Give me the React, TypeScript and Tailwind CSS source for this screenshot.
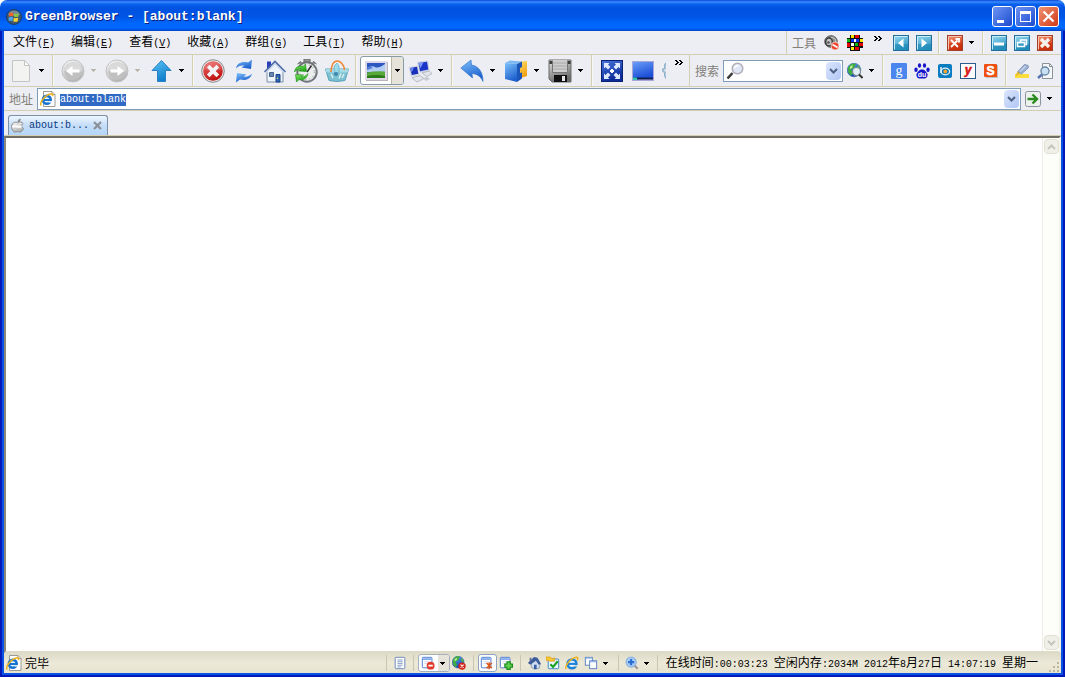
import { useEffect, useRef, useState } from 'react';
import type { ReactNode } from 'react';

const MENUS = [
    ['文件', 'F'],
    ['编辑', 'E'],
    ['查看', 'V'],
    ['收藏', 'A'],
    ['群组', 'G'],
    ['工具', 'T'],
    ['帮助', 'H'],
];

const MONO = "font-['Liberation_Mono',monospace] text-[10px]";

// latin runs are set smaller so that two of them fill one chinese cell
function Mixed({ text }: { text: string }) {
    const runs = text.split(/([\u4e00-\u9fff]+)/).filter(Boolean);
    return (
        <span className="whitespace-pre">
            {runs.map((run, i) =>
                /[\u4e00-\u9fff]/.test(run) ? run : <span key={i} className={MONO}>{run}</span>
            )}
        </span>
    );
}

// gradients shared by all icons
function Gradients() {
    const list: [string, string, string][] = [
        ['gGray', '#fdfdfd', '#b4b4b4'],
        ['gBlue', '#5cc4f6', '#0f7fcb'],
        ['gSky', '#7cc0fb', '#1f62cf'],
        ['gDeep', '#5aa5f5', '#1746b4'],
        ['gScreen', '#6a9cf8', '#1c50d8'],
        ['gRed', '#f26a6a', '#c01414'],
        ['gNavy', '#4a74dd', '#0a2a96'],
        ['gTeal', '#9adcf0', '#2b93c2'],
        ['gOrange', '#f59a78', '#cc2f0c'],
        ['gGold', '#ffe06a', '#f0a010'],
        ['gSteel', '#e4e4e4', '#6c6c6c'],
        ['gGreen', '#8df070', '#22a51a'],
    ];
    return (
        <svg className="absolute size-0" aria-hidden="true">
            <defs>
                {list.map(([id, a, b]) => (
                    <linearGradient key={id} id={id} x1="0" y1="0" x2="0.4" y2="1">
                        <stop offset="0" stopColor={a} />
                        <stop offset="1" stopColor={b} />
                    </linearGradient>
                ))}
            </defs>
        </svg>
    );
}

function Big({ children }: { children: ReactNode }) {
    return <svg viewBox="0 0 24 24" className="size-6 shrink-0" fill="none" aria-hidden="true">{children}</svg>;
}

function Small({ children }: { children: ReactNode }) {
    return <svg viewBox="0 0 16 16" className="size-4 shrink-0" fill="none" aria-hidden="true">{children}</svg>;
}

function Tiny({ children }: { children: ReactNode }) {
    return <svg viewBox="0 0 16 16" className="size-[14px] shrink-0" fill="none" aria-hidden="true">{children}</svg>;
}

function Caret({ dim = false }: { dim?: boolean }) {
    return (
        <svg viewBox="0 0 5 3" className="h-[3px] w-[5px] shrink-0" shapeRendering="crispEdges" aria-hidden="true">
            <path d="M0 0h5v1H4v1H3v1H2V2H1V1H0z" fill={dim ? '#b9b6a8' : '#000'} />
        </svg>
    );
}

function Chevrons() {
    return (
        <svg viewBox="0 0 8 5" className="h-[5px] w-2" shapeRendering="crispEdges" aria-hidden="true">
            <path d="M0 0h2v1h1v1h1v1H3v1H2v1H0V4h1V3h1V2H1V1H0zM4 0h2v1h1v1h1v1H7v1H6v1H4V4h1V3h1V2H5V1H4z" fill="#000" />
        </svg>
    );
}

function Sep() {
    return (
        <div className="flex w-2 shrink-0 self-stretch pl-[3px]" aria-hidden="true">
            <div className="w-px bg-[#d3cfb0]" />
            <div className="w-px bg-[#f8f8f4]" />
        </div>
    );
}

function StatusSep() {
    return <div className="h-4 w-px shrink-0 bg-[#c9c6b4]" aria-hidden="true" />;
}

function Tool({ label, children }: { label: string; children: ReactNode }) {
    return (
        <button aria-label={label} className="flex h-[29px] w-[31px] shrink-0 items-center justify-center">
            {children}
        </button>
    );
}

function DropTool({ label, dim, children }: { label: string; dim?: boolean; children: ReactNode }) {
    return (
        <div className="flex shrink-0">
            <Tool label={label}>{children}</Tool>
            <button aria-label={`${label}菜单`} className="flex w-[13px] items-center pl-[3px]">
                <Caret dim={dim} />
            </button>
        </div>
    );
}

function Mini({ label, children }: { label: string; children: ReactNode }) {
    return (
        <button aria-label={label} className="flex h-6 w-[23px] shrink-0 items-center justify-center">
            {children}
        </button>
    );
}

function StatusButton({ label, children }: { label: string; children: ReactNode }) {
    return (
        <button aria-label={label} className="flex h-[18px] w-[19px] shrink-0 items-center justify-center">
            {children}
        </button>
    );
}

function ComboArrow({ label }: { label: string }) {
    return (
        <button
            type="button"
            aria-label={label}
            className="flex h-[18px] w-[15px] shrink-0 items-center justify-center rounded-sm bg-linear-to-br from-[#dce6fd] to-[#b0c6f5]"
        >
            <svg viewBox="0 0 9 6" className="h-[6px] w-[9px]" fill="none" aria-hidden="true">
                <path d="M1 1l3.500 3.500L8 1" stroke="#4d6185" strokeWidth="2" />
            </svg>
        </button>
    );
}

function IePage() {
    return (
        <Small>
            <path d="M3.500 .5h8.500l3 3v12H3.500z" fill="#fff" stroke="#9b9a94" />
            <path d="M12 .5v3h3" fill="#e4e4e0" stroke="#9b9a94" />
            <circle cx="6.800" cy="8.800" r="3.900" fill="#eaf5ff" stroke="#1673d0" strokeWidth="2.600" />
            <path d="M3.500 9h7.500" stroke="#1673d0" strokeWidth="2" />
            <path d="M8.500 10.200h4v1.400h-4z" fill="#fff" />
            <path d="M1.200 14.500C-1 12 5 3.500 11.500 2.800c1.500 0 1.500 1 .8 2.200" stroke="#f0b21c" strokeWidth="1.500" />
        </Small>
    );
}

function RoundArrow({ flip = false }: { flip?: boolean }) {
    return (
        <Big>
            <circle cx="12" cy="12" r="11" fill="url(#gGray)" stroke="#c2c2c2" />
            <circle cx="12" cy="12" r="8.800" fill="#c0c0c0" />
            <path d="M3.200 12a8.800 8.800 0 0 1 17.600 0c-5 2-12-2-17.600 0z" fill="#dadada" />
            <path
                d={flip ? 'M5.500 10.500h7V7l6.500 5-6.500 5v-3.500h-7z' : 'M18.500 10.500h-7V7L5 12l6.500 5v-3.500h7z'}
                fill="#fff"
            />
        </Big>
    );
}

function Globe() {
    return (
        <>
            <circle cx="7" cy="7" r="6.800" fill="url(#gDeep)" stroke="#24508e" strokeWidth=".5" />
            <path d="M2 3c2-3 6-3 7-2L7 5 4 6.500l2 4-2 2C1 10.500 0 6 2 3z" fill="#3fae3f" />
            <path d="M3 3.500l3-1.500-1 3-2 1z" fill="#c3ef9a" />
            <path d="M10 2l3 2v4l-2-2z" fill="#57b54a" />
        </>
    );
}

function WindowPage() {
    return (
        <>
            <rect x="1.500" y="1.500" width="11" height="12" rx="1" fill="#fff" stroke="#3d6fc9" />
            <path d="M2 3.500h10" stroke="#7fa8ee" strokeWidth="2" />
            <path d="M4 6.500h6M4 8.500h5" stroke="#c9d6ea" />
        </>
    );
}

function BlueBox({ label, children }: { label: string; children: ReactNode }) {
    return (
        <Mini label={label}>
            <Small>
                <rect x=".5" y=".5" width="15" height="15" fill="url(#gTeal)" stroke="#246f9c" />
                <path d="M1 9h14v6H1z" fill="#1c86b4" opacity=".55" />
                <path d="M1.500 14.500v-13h13" stroke="#c6edf8" />
                {children}
            </Small>
        </Mini>
    );
}

function RedBox({ label, small }: { label: string; small?: boolean }) {
    return (
        <Mini label={label}>
            <Small>
                <rect x=".5" y=".5" width="15" height="15" fill="url(#gOrange)" stroke="#a3402a" />
                <path d="M1 8h14v7H1z" fill="#c92c08" opacity=".45" />
                <path d="M1.500 14.500v-13h13" stroke="#f8c4b0" />
                {small ? (
                    <path d="M4 5l7 7M10.500 5.500L4 12M8.500 4H12v3.500" stroke="#fff" strokeWidth="1.800" />
                ) : (
                    <path d="M4 4l8 8M12 4l-8 8" stroke="#f6f2ee" strokeWidth="3.200" />
                )}
            </Small>
        </Mini>
    );
}

function TitleBar() {
    const frame = 'flex size-[21px] items-center justify-center rounded-[3px] border border-white bg-linear-to-br';
    return (
        <header className="flex h-[31px] shrink-0 items-center rounded-t-[7px] bg-[linear-gradient(180deg,#0b48d8_0,#3a8cff_2px,#0a62ee_4px,#0053e1_8px,#0055e6_17px,#0066fc_23px,#0068ff_28px,#0042c8_31px)] pt-[2px] pr-[6px] pl-[6px]">
            <svg viewBox="0 0 16 16" className="size-4" aria-hidden="true">
                <circle cx="8" cy="8" r="7.500" fill="#3b5a70" stroke="#1d3a66" />
                <path d="M2 6a6.300 6.300 0 0 1 12 0q-6 2-12 0z" fill="#a9bcc8" opacity=".5" />
                <path d="M3.200 4.300q2-1.500 4.300-.3L7 7.500q-2-1-4.200.2z" fill="#f0642c" />
                <path d="M8.300 4.500q2 1 4.500-.2L12.200 7.600q-2 1-4.400 0z" fill="#8cc63e" />
                <path d="M2.800 8.500q2-1.200 4.200-.2l-.5 3.600q-2-1-3.900 0z" fill="#4ba5ee" />
                <path d="M7.800 8.700q2 1 4.400-.1l-.5 3.600q-2 1-4.400 0z" fill="#fbd032" />
            </svg>
            <h1 className="ml-[3px] flex-1 truncate pt-px font-['Liberation_Mono',monospace] text-[13px] leading-4 font-bold text-white [text-shadow:1px_1px_0_#0a1f80]">
                GreenBrowser - [about:blank]
            </h1>
            <div className="flex gap-[2px]">
                <button aria-label="最小化" className={`${frame} from-[#6d93f2] to-[#1d49d0]`}>
                    <svg viewBox="0 0 19 19" className="size-[19px]"><path d="M4 13h7v3H4z" fill="#fff" /></svg>
                </button>
                <button aria-label="最大化" className={`${frame} from-[#6d93f2] to-[#1d49d0]`}>
                    <svg viewBox="0 0 19 19" className="size-[19px]" shapeRendering="crispEdges">
                        <path d="M4 4h11v11H4zM5 7v7h9V7z" fill="#fff" fillRule="evenodd" />
                    </svg>
                </button>
                <button aria-label="关闭" className={`${frame} from-[#f0906e] to-[#cf3510]`}>
                    <svg viewBox="0 0 19 19" className="size-[19px]">
                        <path d="M4.500 4.500l10 10M14.500 4.500l-10 10" stroke="#fff" strokeWidth="2.200" />
                    </svg>
                </button>
            </div>
        </header>
    );
}

function MenuRow() {
    return (
        <div className="flex h-6 shrink-0 items-center border-b border-[#d3cfb0]">
            <nav className="flex min-w-0 flex-1 pl-px">
                {MENUS.map(([name, key]) => (
                    <button key={key} className="h-5 px-2 whitespace-nowrap">
                        {name}
                        <span className={MONO}>(<u>{key}</u>)</span>
                    </button>
                ))}
            </nav>
            <div className="flex shrink-0 items-center self-stretch border-l border-[#d3cfb0] pr-[5px] pl-[5px]">
                <span className="w-7 text-[#83807a]">工具</span>
                <Mini label="静音">
                    <Small>
                        <ellipse cx="7" cy="6.500" rx="6.300" ry="5.800" fill="#8b8b8b" stroke="#5a5a5a" />
                        <ellipse cx="5" cy="7" rx="3.300" ry="4" fill="#c4c4c4" stroke="#3c3c3c" strokeWidth="1.500" />
                        <circle cx="4.500" cy="7.500" r="1.300" fill="#555" />
                        <path d="M7 2.500q5 0 5 5" stroke="#d0d0d0" />
                        <circle cx="11" cy="11" r="4" fill="#e8452c" stroke="#fff" strokeWidth=".6" />
                        <path d="M8.500 9.500l5 3" stroke="#fff" strokeWidth="1.600" />
                    </Small>
                </Mini>
                <Mini label="颜色">
                    <svg viewBox="0 0 16 16" className="size-4 shrink-0" shapeRendering="crispEdges" aria-hidden="true">
                        <path d="M3 0h10v3h3v10h-3v3H3v-3H0V3h3z" fill="#111" />
                        <path d="M8 0h4v3H8zM0 8h3v4H0zM12 8h4v3h-4zM8 12h4v3H8z" fill="#e80000" />
                        <path d="M4 0h3v3H4zM13 4h3v3h-3zM4 12h3v3H4z" fill="#ffe600" />
                        <path d="M0 4h3v3H0zM8 8h3v3H8z" fill="#12b812" />
                        <path d="M4 4h3v3H4zM9 4h3v3H9z" fill="#1030e8" />
                        <path d="M7 4h2v3H7zM4 8h3v3H4z" fill="#fff" />
                    </svg>
                </Mini>
                <button aria-label="更多" className="flex h-[18px] w-[23px] justify-center pt-[2px]"><Chevrons /></button>
                <BlueBox label="上一个"><path d="M10.500 3.500v9L5 8z" fill="#fff" /></BlueBox>
                <BlueBox label="下一个"><path d="M5.500 3.500v9L11 8z" fill="#fff" /></BlueBox>
                <Sep />
                <RedBox label="关闭页面" small />
                <button aria-label="关闭菜单" className="flex h-5 w-[13px] items-center pl-[3px]"><Caret /></button>
                <Sep />
                <BlueBox label="最小化页面"><path d="M3 7.500h10v3H3z" fill="#fff" /></BlueBox>
                <BlueBox label="还原页面">
                    <path d="M6.500 7V5h6v4.500h-2M3.500 7.500h7v4h-7z" stroke="#fff" strokeWidth="1.500" />
                </BlueBox>
                <RedBox label="关闭全部" />
            </div>
        </div>
    );
}

function MainTools() {
    return (
        <div className="flex min-w-0 flex-1 items-center self-stretch overflow-hidden pl-px">
            <DropTool label="新建">
                <Big>
                    <path d="M3.500 1.500h12l5 5v16h-17z" fill="#f3f3f2" stroke="#c4c4c4" />
                    <path d="M15.500 1.500v5h5z" fill="#fff" stroke="#c4c4c4" />
                </Big>
            </DropTool>
            <Sep />
            <DropTool label="后退" dim><RoundArrow /></DropTool>
            <DropTool label="前进" dim><RoundArrow flip /></DropTool>
            <DropTool label="向上">
                <Big><path d="M12.500 1.500l9.500 10h-5.500v11h-8v-11H3z" fill="url(#gBlue)" stroke="#2a82c4" /></Big>
            </DropTool>
            <Sep />
            <Tool label="停止">
                <Big>
                    <circle cx="12" cy="12" r="11.300" fill="#e6e6e6" stroke="#8c8c8c" />
                    <circle cx="12" cy="12" r="9.800" fill="url(#gRed)" />
                    <path d="M3 10a9.200 9.200 0 0 1 18 0q-9 4-18 0z" fill="#fff" opacity=".15" />
                    <path d="M7.200 7.200l9.600 9.600M16.800 7.200l-9.600 9.600" stroke="#f4f4f4" strokeWidth="3.800" />
                </Big>
            </Tool>
            <Tool label="刷新">
                <Big>
                    <path d="M4 9.500C5 4 10 2 16 3.500L20 .5 19 10l-9.500-1.500 3-2C9 6 6 7 4 9.500z" fill="url(#gSky)" />
                    <path d="M20 14.500C19 20 14 22 8 20.500l-4 3L5 14l9.500 1.500-3 2c3.500.5 6.500-.5 8.500-3z" fill="url(#gSky)" />
                </Big>
            </Tool>
            <Tool label="主页">
                <Big>
                    <path d="M4 2.500h4V10H4z" fill="#2a3fb8" />
                    <path d="M4 12.500l8-8 8 8v10.500H4z" fill="#eef4fb" stroke="#7b8da8" />
                    <path d="M1.500 13L12 2.500 22.500 13" stroke="#4a68a8" strokeWidth="1.600" />
                    <path d="M3 13.500l9-9 9 9" stroke="#cdd8ea" strokeWidth="1.200" />
                    <path d="M13 15.500h4v7.500h-4z" fill="#2c67b5" stroke="#194285" />
                    <path d="M6.500 13.500h4v4h-4z" fill="#6887b4" stroke="#47608a" />
                    <circle cx="14.300" cy="19.200" r=".7" fill="#ffe26a" />
                </Big>
            </Tool>
            <Tool label="定时刷新">
                <Big>
                    <path d="M10 0h6v3h-6zM3.500 5l3-2.500L8 5M22.500 5l-3-2.500L18 5" fill="#999" stroke="#666" />
                    <circle cx="13" cy="13" r="9.700" fill="#eceeee" stroke="#70767a" strokeWidth="2" />
                    <circle cx="13" cy="13" r="7.300" stroke="#8c8c8c" strokeDasharray="1 3" />
                    <path d="M13 13l4.500-6.500" stroke="#333" strokeWidth="1.500" />
                    <path d="M.5 13C1 8 5 6 9 7.500L11.500 5l1 7.500-8-.5 2.500-2C4.500 9.800 2 11 .5 13z" fill="url(#gGreen)" stroke="#1b9114" strokeWidth=".6" />
                    <path d="M14 14.500C13 19.500 9 22 5 20.500L2.500 23l-1-7.500 8 .5L7 18c2.500.3 5-1 7-3.500z" fill="url(#gGreen)" stroke="#1b9114" strokeWidth=".6" />
                </Big>
            </Tool>
            <Tool label="收藏篮">
                <Big>
                    <path d="M.5 10h23L20 21.500q-8 2-16 0z" fill="#7cc0d2" stroke="#5ba3ba" />
                    <path d="M.5 10h23l-1 3.500h-21z" fill="#a6dbe6" />
                    <path d="M6 15l2 4M16 14.500l-2 5M19 15l-2 4" stroke="#d8eff2" strokeWidth="1.500" />
                    <path d="M6 13C6.500 5 9 2 12 2s7 3 7.500 9" stroke="#ee8434" strokeWidth="1.600" />
                    <path d="M9 7l3-3 2 3v6l-4 2z" fill="#9adbe8" stroke="#5ba3ba" strokeWidth=".6" />
                    <circle cx="11" cy="15" r="2" fill="#3f88ad" />
                </Big>
            </Tool>
            <Sep />
            <div className="flex h-[29px] w-11 shrink-0 overflow-hidden rounded-[3px] border border-[#8a9ba8] bg-white">
                <button aria-label="显示图片" className="flex w-[30px] items-center justify-center">
                    <Big>
                        <path d="M2 3h22v19H2z" fill="#b6b6bc" />
                        <path d="M1 2h22v19H1z" fill="#dfd8e6" />
                        <path d="M3 4h18v15H3z" fill="#2d56c0" />
                        <path d="M3 9q5-3 8-1t10-3v8H3z" fill="#b4cdf2" />
                        <path d="M3 9q4-2 6 0l-6 2z" fill="#4a7ad8" />
                        <path d="M3 13.500q9-2 18-1V19H3z" fill="#58a83a" />
                        <path d="M3 17q9-2 18 0v2H3z" fill="#2b7a19" />
                    </Big>
                </button>
                <button aria-label="图片菜单" className="flex flex-1 items-center border-l border-[#b9b7a8] bg-[#e6e4da] pl-[3px]">
                    <Caret />
                </button>
            </div>
            <DropTool label="代理">
                <Big>
                    <path d="M9 3l11-1.500 1.500 10L12 14z" fill="#c9d0e4" />
                    <path d="M10.500 4l8.500-1.200 1.300 7.700-8.300 1.700z" fill="#1a35c8" />
                    <path d="M10.500 4l5-.7-3 6z" fill="#7f9af5" />
                    <path d="M14 14l7-2 3 2.500-5 3z" fill="#e4e6ec" stroke="#a4a8b2" strokeWidth=".7" />
                    <path d="M.5 8l9.500-1.500 1.500 9.500L3 18z" fill="#d4d7e0" />
                    <path d="M2 9l7-1.200 1.300 7L3.800 16z" fill="#1730bb" />
                    <path d="M2 9l4-.6-2.300 5z" fill="#6d87f0" />
                    <path d="M4 19l8-2.500 4 3L9 23z" fill="#e4e6ec" stroke="#a4a8b2" strokeWidth=".7" />
                    <path d="M15 19l4-1 3 2-4 2z" fill="#c6c9d2" />
                </Big>
            </DropTool>
            <Sep />
            <DropTool label="撤销">
                <Big>
                    <path d="M.8 9L11 1l.5 5c7 1 11.500 7 11.500 16.500C20.500 17 17 15 12 14.500l.5 4.500z" fill="url(#gSky)" stroke="#2a6cc4" strokeWidth=".6" />
                </Big>
            </DropTool>
            <DropTool label="收藏夹">
                <Big>
                    <path d="M14 3l9-1v15l-9 3z" fill="url(#gGold)" />
                    <path d="M1 4l5-2.500 12 1-5 2.500z" fill="#7cb8f4" />
                    <path d="M1 4l12 1v18L1 20z" fill="url(#gSky)" />
                    <path d="M13 5l5-2.500V8l-2 1v5l2-.5v6L13 23z" fill="#1c55b8" />
                </Big>
            </DropTool>
            <DropTool label="保存">
                <Big>
                    <path d="M1 1h22v22H4l-3-3z" fill="url(#gSteel)" stroke="#6b6b6b" />
                    <path d="M5 1h14v12H5z" fill="#cdcdcd" />
                    <path d="M5 4h14M5 7h14M5 10h14" stroke="#aaa" />
                    <path d="M1.500 2h2.500v3H1.500zM20 2h2.500v3H20z" fill="#3c3c3c" />
                    <path d="M4.500 2v11.500h15V2" stroke="#777" />
                    <path d="M6 16h13v7H6z" fill="#111" />
                    <path d="M14 17h3v5h-3z" fill="#e6e6e6" />
                </Big>
            </DropTool>
            <Sep />
            <Tool label="全屏">
                <Big>
                    <rect x="1.500" y="1.500" width="21" height="21" fill="url(#gNavy)" stroke="#0b2272" />
                    <path d="M4 4h5.500L8 5.500l2.500 2.500L8 10.500 5.500 8 4 9.500zM20 4h-5.500L16 5.500 13.500 8l2.500 2.500L18.500 8 20 9.500zM4 20h5.500L8 18.500l2.500-2.500L8 13.500 5.500 16 4 14.500zM20 20h-5.500l1.500-1.500-2.500-2.500 2.500-2.500 2.500 2.500 1.500-1.500z" fill="#dfe8fc" />
                    <path d="M12 10l2 2-2 2-2-2z" fill="#fff" stroke="#fff" />
                </Big>
            </Tool>
            <Tool label="屏幕">
                <Big>
                    <path d="M1 2h22v20H1z" fill="#a9a6d8" />
                    <path d="M2 3h20v16H2z" fill="url(#gScreen)" />
                    <path d="M2 18.500h20v2H2z" fill="#0e1f52" />
                    <path d="M2 18.500h4v2.500H2z" fill="#2fc5b0" />
                </Big>
            </Tool>
            <div className="flex w-2 shrink-0 overflow-hidden pl-1" aria-hidden="true">
                <svg viewBox="0 0 24 24" className="size-6 shrink-0" fill="none">
                    <path d="M4 4q-2 2-1 5l-3 2 3 3q-1 4 2 6" fill="#cfe0ee" stroke="#8db0cc" strokeWidth="1.500" />
                </svg>
            </div>
            <button aria-label="更多工具" className="flex h-[21px] w-[26px] shrink-0 justify-center"><Chevrons /></button>
        </div>
    );
}

function SearchTools() {
    return (
        <div className="flex shrink-0 items-center self-stretch border-l border-[#d3cfb0] pr-[5px] pl-[5px]">
            <label htmlFor="search" className="w-7 text-[#83807a]">搜索</label>
            <div className="flex h-[22px] w-[120px] items-center border border-[#7f9db9] bg-white pr-px pl-[2px]">
                <svg viewBox="0 0 18 18" className="size-[18px] shrink-0" fill="none" aria-hidden="true">
                    <path d="M1.500 16.500l5-5.500" stroke="#3a3a3a" strokeWidth="2.600" />
                    <circle cx="11.500" cy="6.500" r="5.300" fill="#dfe6f4" stroke="#b0aeb8" strokeWidth="1.500" />
                    <path d="M8.500 6q1-2.500 4-2.500" stroke="#fff" strokeWidth="1.500" />
                </svg>
                <input id="search" type="text" className="min-w-0 flex-1 px-1 outline-none" />
                <ComboArrow label="搜索记录" />
            </div>
            <Mini label="搜索网页">
                <Small>
                    <Globe />
                    <circle cx="9.500" cy="8.500" r="4" fill="#e2eff6" stroke="#7a8a94" strokeWidth="1.200" />
                    <path d="M12 11.500l3.500 3.500" stroke="#333" strokeWidth="2" />
                </Small>
            </Mini>
            <button aria-label="搜索引擎" className="flex h-5 w-[13px] items-center pl-[3px]"><Caret /></button>
            <Sep />
            <Mini label="谷歌">
                <Small>
                    <rect width="16" height="16" rx="1" fill="#4a86ee" />
                    <text x="8" y="12" textAnchor="middle" fontFamily="Liberation Serif" fontSize="14" fill="#fff">g</text>
                </Small>
            </Mini>
            <Mini label="百度">
                <Small>
                    <path d="M8 6.500c-3 0-3.500 2-5 3.500-1.500 2 0 5.500 2.500 5.500h5c2.500 0 4-3.500 2.500-5.500-1.500-1.500-2-3.500-5-3.500z" fill="#1414cc" />
                    <ellipse cx="2" cy="6.800" rx="1.700" ry="2.200" fill="#1414cc" />
                    <ellipse cx="5.500" cy="2.500" rx="1.600" ry="2.300" fill="#1414cc" />
                    <ellipse cx="10.500" cy="2.500" rx="1.600" ry="2.300" fill="#1414cc" />
                    <ellipse cx="14" cy="6.800" rx="1.700" ry="2.200" fill="#1414cc" />
                    <text x="8" y="14" textAnchor="middle" fontFamily="Liberation Sans" fontWeight="bold" fontSize="7" fill="#fff">du</text>
                </Small>
            </Mini>
            <Mini label="必应">
                <Small>
                    <rect x="1" y="1" width="14" height="14" rx="2" fill="#0c7cc0" />
                    <path d="M4 4v6" stroke="#e6f3fb" strokeWidth="1.500" />
                    <ellipse cx="8.300" cy="8.500" rx="4.300" ry="3.300" stroke="#e6f3fb" strokeWidth="1.300" />
                    <circle cx="8.300" cy="8.500" r="1.900" fill="#f5a52a" />
                </Small>
            </Mini>
            <Mini label="有道">
                <Small>
                    <rect x=".5" y=".5" width="15" height="15" fill="#fff" stroke="#2c5c8c" />
                    <text x="8" y="11" textAnchor="middle" fontFamily="Liberation Sans" fontStyle="italic" fontWeight="bold" fontSize="12" fill="#d81818" stroke="#d81818" strokeWidth=".6">y</text>
                </Small>
            </Mini>
            <Mini label="搜狗">
                <Small>
                    <path d="M3 2h12v13H3z" fill="#c0c0c0" />
                    <rect x="1" y="1" width="13" height="13" rx="1" fill="#f0500f" />
                    <text x="7.500" y="12" textAnchor="middle" fontFamily="Liberation Sans" fontWeight="bold" fontSize="12" fill="#fff" stroke="#fff" strokeWidth=".6">S</text>
                </Small>
            </Mini>
            <Sep />
            <Mini label="高亮">
                <Small>
                    <path d="M1 11h14v4H1z" fill="#fadc3a" />
                    <path d="M1.500 13l2-5 3 3z" fill="#e8b828" />
                    <path d="M4 8.500L10.500 1.500 14 2.500l.5 2L7.500 11z" fill="#9fb4d4" stroke="#7b90b4" />
                    <path d="M6 8.500l5.500-5.500" stroke="#e4ecf8" />
                </Small>
            </Mini>
            <Mini label="页内查找">
                <Small>
                    <path d="M5.500.5h7l3 3v12h-10z" fill="#f6f7f9" stroke="#8a929c" />
                    <path d="M12.500.5v3h3" stroke="#8a929c" />
                    <circle cx="8" cy="8" r="4" fill="#c8e2f4" stroke="#6584a4" strokeWidth="1.300" />
                    <path d="M5 11.500L1 15" stroke="#5574b0" strokeWidth="2.500" />
                </Small>
            </Mini>
        </div>
    );
}

function AddressRow() {
    const [url, setUrl] = useState('about:blank');
    const box = useRef<HTMLInputElement>(null);

    useEffect(() => {
        box.current?.focus();
        box.current?.select();
    }, []);

    return (
        <form
            className="flex h-6 shrink-0 items-center border-b border-[#d3cfb0] pr-[5px] pl-[5px]"
            onSubmit={(e) => e.preventDefault()}
        >
            <label htmlFor="address" className="w-7 shrink-0 text-[#83807a]">地址</label>
            <div className="flex h-[22px] min-w-0 flex-1 items-center border border-[#7f9db9] bg-white pr-px pl-[2px]">
                <IePage />
                <input
                    id="address"
                    ref={box}
                    type="text"
                    spellCheck={false}
                    value={url}
                    onChange={(e) => setUrl(e.target.value)}
                    className="ml-1 min-w-0 flex-1 pt-[2px] font-['Liberation_Mono',monospace] text-[10px] leading-3 outline-none selection:bg-[#316ac5] selection:text-white"
                />
                <ComboArrow label="地址记录" />
            </div>
            <button aria-label="转到" className="ml-1 size-4 shrink-0">
                <Small>
                    <rect x=".5" y=".5" width="15" height="15" rx="2" fill="#eef0ee" stroke="#8a929c" />
                    <path d="M2.500 8h9M7.500 3.500L12 8l-4.500 4.500" stroke="#2a8c1c" strokeWidth="2.400" />
                </Small>
            </button>
            <button type="button" aria-label="转到菜单" className="flex h-5 w-[15px] shrink-0 items-center pl-[6px]"><Caret /></button>
        </form>
    );
}

function TabRow() {
    return (
        <div className="flex h-[25px] shrink-0 items-end border-b border-[#d3cfb0] pl-1">
            <div className="flex h-[20px] w-[100px] items-center rounded-t-[3px] border border-b-0 border-[#7c8ea8] bg-linear-to-b from-[#eef6ff] via-[#c4ddf8] to-[#b4d6f8] px-px">
                <svg viewBox="0 0 16 16" className="size-[15px] shrink-0" fill="none" aria-hidden="true">
                    <path d="M8 5c2-1.500 5-1 6 .8-2 1.200-2 4.200.3 5.200C13.500 13.500 12 15 10.500 15c-1 0-1.500-.5-2.500-.5S6.500 15 5.500 15C3 15 1 10.500 2 7.500 3 4.500 6 4 8 5z" fill="url(#gGray)" stroke="#858585" />
                    <path d="M8 4.500C8 2.500 9.500 1 11.500.5c0 2.300-1.500 4-3.500 4z" fill="#888" />
                    <path d="M2.500 9.500c3-2 6 1 10-.5" stroke="#fff" strokeWidth="2" />
                </svg>
                <button className="ml-1 flex-1 text-left font-['Liberation_Mono',monospace] text-[10px] leading-3 whitespace-nowrap text-[#0a3a80]">
                    about:b...
                </button>
                <button aria-label="关闭标签" className="shrink-0 pr-1">
                    <svg viewBox="0 0 9 9" className="size-[9px]" aria-hidden="true">
                        <path d="M1 1l7 7M8 1L1 8" stroke="#8b9097" strokeWidth="2.200" />
                    </svg>
                </button>
            </div>
        </div>
    );
}

function ScrollButton({ label, down }: { label: string; down?: boolean }) {
    return (
        <button disabled aria-label={label} className="flex size-[15px] items-center justify-center rounded-sm border border-[#e2e0d4] bg-[#f1f0e8]">
            <svg viewBox="0 0 9 6" className="h-[6px] w-[9px]" fill="none" aria-hidden="true">
                <path d={down ? 'M1 1l3.500 3.500L8 1' : 'M1 5l3.500-3.500L8 5'} stroke="#c6c5bb" strokeWidth="2" />
            </svg>
        </button>
    );
}

function StatusBar() {
    return (
        <footer className="flex h-[20px] shrink-0 items-center bg-linear-to-b from-[#dedbc9] via-[#ece9d8] to-[#e6e3d0] pr-px pl-[2px]">
            <IePage />
            <span className="ml-[3px] flex-1">完毕</span>
            <StatusSep />
            <div className="flex w-[26px] justify-center">
                <StatusButton label="日志">
                    <Tiny>
                        <rect x="2.500" y="1.500" width="11" height="13" rx="1" fill="#fff" stroke="#5b7db8" />
                        <path d="M5 4.500h6M5 6.500h6M5 8.500h6M5 10.500h6M5 12.500h4" stroke="#7b93bd" />
                    </Tiny>
                </StatusButton>
            </div>
            <StatusSep />
            <div className="ml-1 flex h-[18px] w-8 overflow-hidden rounded-[3px] border border-[#a5afbc] bg-white">
                <button aria-label="过滤" className="flex w-[19px] items-center justify-center">
                    <Tiny>
                        <WindowPage />
                        <circle cx="11" cy="11" r="4.500" fill="#e23a2a" />
                        <path d="M8.500 11h5" stroke="#fff" strokeWidth="2" />
                    </Tiny>
                </button>
                <button aria-label="过滤菜单" className="flex flex-1 items-center bg-[#e6e4da] pl-[2px]"><Caret /></button>
            </div>
            <StatusButton label="代理">
                <Tiny>
                    <Globe />
                    <circle cx="11.500" cy="11.500" r="4.200" fill="#d2281e" />
                    <path d="M9.800 9.800l3.400 3.400M13.200 9.800l-3.400 3.400" stroke="#fff" strokeWidth="1.300" />
                </Tiny>
            </StatusButton>
            <div className="w-1" />
            <StatusSep />
            <div className="ml-1 flex h-[18px] w-[19px] items-center justify-center rounded-[3px] border border-[#8ea3bd] bg-white">
                <button aria-label="弹出窗口">
                    <Tiny>
                        <WindowPage />
                        <path d="M7.500 8l6 6M13.500 8l-6 6M10.500 7v8" stroke="#d8541c" strokeWidth="1.600" />
                    </Tiny>
                </button>
            </div>
            <StatusButton label="新窗口">
                <Tiny>
                    <WindowPage />
                    <path d="M11 6v10M6 11h10" stroke="#178a1a" strokeWidth="5" />
                    <path d="M11 7.500v7M7.500 11h7" stroke="#5fd04e" strokeWidth="2.500" />
                </Tiny>
            </StatusButton>
            <div className="w-1" />
            <StatusSep />
            <div className="w-1" />
            <StatusButton label="主页">
                <Tiny>
                    <path d="M5 8l6-3 4 4-1 5-5 1-4-2z" fill="#cfdcee" stroke="#8c9cb4" />
                    <path d="M1 8l7-7 4 1 4 7-2.500 1L10 5 4 10z" fill="#3a5c9c" />
                    <path d="M8 10h3v5H8z" fill="#375fa8" />
                    <path d="M3 2h2v4H3z" fill="#5a6f98" />
                </Tiny>
            </StatusButton>
            <StatusButton label="选项">
                <Tiny>
                    <rect x="2.500" y="3.500" width="12" height="11" rx="1" fill="#e9f5ff" stroke="#2f7bc2" />
                    <path d="M5 9.500l3 3 5.500-6.500" stroke="#1fa324" strokeWidth="2.600" />
                    <path d="M0 1h5l2 2 3-1v4H5L0 5z" fill="#f7c52c" stroke="#cf9412" strokeWidth=".6" />
                </Tiny>
            </StatusButton>
            <StatusButton label="IE">
                <Tiny>
                    <circle cx="8" cy="9" r="5" fill="#e4f3ff" stroke="#1f83d8" strokeWidth="3" />
                    <path d="M4 9h8.500" stroke="#1f83d8" strokeWidth="2.400" />
                    <path d="M10 10.500h5v1.500h-5z" fill="#ece9d8" />
                    <path d="M1.500 15C-1 12 6 2.500 13 1.500c2 0 2 1.500 1 3.500" stroke="#f0b21c" strokeWidth="1.600" />
                </Tiny>
            </StatusButton>
            <StatusButton label="窗口">
                <Tiny>
                    <rect x="1.500" y="1.500" width="8" height="9" fill="#fff" stroke="#4f78bb" />
                    <rect x="6.500" y="5.500" width="8" height="9" fill="#fff" stroke="#4f78bb" />
                    <path d="M2 2.500h7M7 6.500h7" stroke="#8fb2ea" strokeWidth="1.500" />
                </Tiny>
            </StatusButton>
            <button aria-label="窗口菜单" className="flex h-4 w-[17px] items-center pl-[2px]"><Caret /></button>
            <StatusSep />
            <div className="w-1" />
            <StatusButton label="缩放">
                <Tiny>
                    <path d="M10.500 10.500l4 4" stroke="#a09498" strokeWidth="2.500" />
                    <circle cx="7" cy="7" r="5.800" fill="#a8cdf6" stroke="#86aede" strokeWidth="1.200" />
                    <path d="M7 3.500v7M3.500 7h7" stroke="#2a6cd0" strokeWidth="2.400" />
                </Tiny>
            </StatusButton>
            <button aria-label="缩放菜单" className="flex h-4 w-[15px] items-center pl-[2px]"><Caret /></button>
            <StatusSep />
            <span className="ml-2 shrink-0">
                <Mixed text="在线时间:00:03:23 空闲内存:2034M 2012年8月27日 14:07:19 星期一" />
            </span>
            <svg viewBox="0 0 12 12" className="ml-[10px] size-3 shrink-0 self-end" shapeRendering="crispEdges" aria-hidden="true">
                <path d="M9 1h2v2H9zM5 5h2v2H5zM9 5h2v2H9zM1 9h2v2H1zM5 9h2v2H5zM9 9h2v2H9z" fill="#bab6a2" />
            </svg>
        </footer>
    );
}

export default function App() {
    return (
        <div className="flex h-screen flex-col bg-white font-['Noto_Sans_CJK_SC',sans-serif] text-[12px] leading-4 text-black">
            <Gradients />
            <TitleBar />
            <div className="flex min-h-0 flex-1 border-x-2 border-b-2 border-[#0019b8]">
                <div className="flex min-h-0 min-w-0 flex-1 flex-col border-x-2 border-b-2 border-[#0a52e6] bg-[#edeef3]">
                    <MenuRow />
                    <div className="flex h-8 shrink-0 items-center border-b border-[#d3cfb0]">
                        <MainTools />
                        <SearchTools />
                    </div>
                    <AddressRow />
                    <TabRow />
                    <main className="flex min-h-0 flex-1 justify-end border-2 border-t-[#716f64] border-r-[#f4f3ea] border-b-[#dddac8] border-l-[#8a887c] bg-white">
                        <div className="flex w-[17px] flex-col items-center justify-between border-l border-[#eeede5] bg-[#fdfdfa] py-px">
                            <ScrollButton label="向上滚动" />
                            <ScrollButton label="向下滚动" down />
                        </div>
                    </main>
                    <StatusBar />
                </div>
            </div>
        </div>
    );
}
